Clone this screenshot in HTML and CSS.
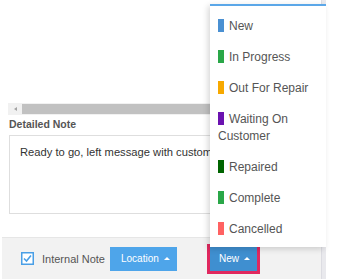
FILE: index.html
```html
<!DOCTYPE html>
<html>
<head>
    <meta charset="UTF-8">
    <title>Detailed Note</title>
    <link rel="stylesheet" href="styles.css">
</head>
<body>
  <div class="screen">
    <div class="main">
      <div class="hscroll">
        <span class="hscroll-arrow"></span>
        <span class="hscroll-thumb"></span>
      </div>
      <label class="note-label">Detailed Note</label>
      <div class="note-box">Ready to go, left message with customer</div>
      <div class="footer">
        <svg class="check" width="13" height="13" viewBox="0 0 13 13">
          <rect x="0.75" y="0.75" width="11.5" height="11.5" fill="#fff" stroke="#4a9fe6" stroke-width="1.5"/>
          <path d="M3 6.5 L5.5 9 L10 3.5" fill="none" stroke="#4a9fe6" stroke-width="1.6"/>
        </svg>
        <span class="check-label">Internal Note</span>
        <button class="btn btn-location">Location <span class="caret"></span></button>
        <button class="btn btn-status">New <span class="caret"></span></button>
      </div>
    </div>
    <div class="vscroll"></div>

    <ul class="status-menu">
      <li><span class="tag tag-new"></span>New</li>
      <li><span class="tag tag-progress"></span>In Progress</li>
      <li><span class="tag tag-repair"></span>Out For Repair</li>
      <li><span class="tag tag-waiting"></span>Waiting On Customer</li>
      <li><span class="tag tag-repaired"></span>Repaired</li>
      <li><span class="tag tag-complete"></span>Complete</li>
      <li><span class="tag tag-cancelled"></span>Cancelled</li>
    </ul>
  </div>
</body>
</html>
```

FILE: styles.css
```css
body {
    margin: 0;
    font-family: "Liberation Sans", Arial, sans-serif;
    background: #fff;
}
.screen {
    position: relative;
    display: flex;
    width: 338px;
    height: 279px;
    overflow: hidden;
}
.main {
    width: 321px;
    padding-top: 103px;
    display: flex;
    flex-direction: column;
}
.vscroll {
    width: 5px;
    background: #e9e9ed;
    border-left: 1px solid #dcdce2;
    box-sizing: border-box;
}

/* horizontal scrollbar */
.hscroll {
    margin-left: 8px;
    height: 12px;
    background: #f1f1f1;
    display: flex;
    align-items: center;
}
.hscroll-arrow {
    width: 14px;
    display: flex;
    justify-content: center;
}
.hscroll-arrow::before {
    content: "";
    border-top: 2.5px solid transparent;
    border-bottom: 2.5px solid transparent;
    border-right: 3px solid #a3a3a3;
}
.hscroll-thumb {
    flex: 1;
    height: 10px;
    background: #c1c1c1;
}

.note-label {
    margin: 3px 0 0 9px;
    font-size: 10.5px;
    font-weight: bold;
    color: #555;
    line-height: 13px;
}
.note-box {
    margin: 4px 0 0 9px;
    height: 79px;
    box-sizing: border-box;
    border: 1px solid #dedede;
    border-right: none;
    padding: 9px 10px;
    font-size: 11.2px;
    line-height: 14px;
    color: #333;
    white-space: nowrap;
    overflow: hidden;
}

/* footer bar */
.footer {
    margin: 23px 0 0 2px;
    flex: 1;
    background: #f2f2f2;
    border-top: 1px solid #e6e6e6;
    display: flex;
    align-items: center;
    padding-left: 19px;
}
.check {
    display: block;
}
.check-label {
    margin-left: 8px;
    font-size: 11px;
    color: #555;
}
.btn {
    height: 24px;
    border: none;
    color: #fff;
    font-family: "Liberation Sans", Arial, sans-serif;
    font-size: 10px;
    display: flex;
    align-items: center;
    gap: 5px;
}
.btn-location {
    margin-left: 5px;
    width: 67px;
    padding: 0 0 0 11px;
    background: #4ea5ea;
}
.btn-status {
    margin-left: 33px;
    width: 47px;
    padding: 0 0 0 9px;
    background: #3f8fd0;
    outline: 3px solid #e0285f;
}
.caret {
    border-left: 3px solid transparent;
    border-right: 3px solid transparent;
    border-bottom: 3px solid #fff;
}

/* status dropdown */
.status-menu {
    position: absolute;
    left: 210px;
    top: 4px;
    width: 116px;
    margin: 0;
    padding: 5px 0 2px;
    list-style: none;
    background: #fff;
    border-top: 2px solid #5ba7e8;
    box-shadow: -2px 2px 6px rgba(0, 0, 0, 0.16);
}
.status-menu li {
    padding: 7px 8px;
    font-size: 12px;
    line-height: 17px;
    color: #555;
}
.tag {
    display: inline-block;
    width: 6px;
    height: 13px;
    margin-right: 5px;
    vertical-align: -2px;
}
.tag-new { background: #4a90d2; }
.tag-progress { background: #2aa748; }
.tag-repair { background: #f7a900; }
.tag-waiting { background: #6b12b0; }
.tag-repaired { background: #006400; }
.tag-complete { background: #2aa748; }
.tag-cancelled { background: #ff6262; }
```
